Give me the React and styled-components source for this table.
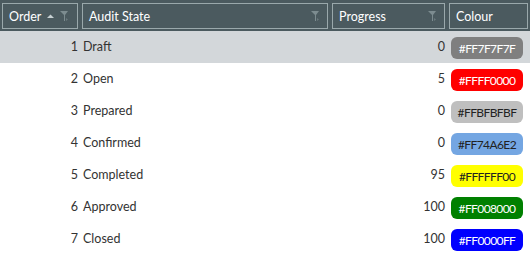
import React from "react"
import styled, { createGlobalStyle } from "styled-components"

const rows = [
  { order: 1, state: "Draft", progress: 0, colour: "#FF7F7F7F", bg: "#7f7f7f", fg: "#fff" },
  { order: 2, state: "Open", progress: 5, colour: "#FFFF0000", bg: "#ff0000", fg: "#fff" },
  { order: 3, state: "Prepared", progress: 0, colour: "#FFBFBFBF", bg: "#bfbfbf", fg: "#222" },
  { order: 4, state: "Confirmed", progress: 0, colour: "#FF74A6E2", bg: "#74a6e2", fg: "#222" },
  { order: 5, state: "Completed", progress: 95, colour: "#FFFFFF00", bg: "#ffff00", fg: "#222" },
  { order: 6, state: "Approved", progress: 100, colour: "#FF008000", bg: "#008000", fg: "#fff" },
  { order: 7, state: "Closed", progress: 100, colour: "#FF0000FF", bg: "#0000ff", fg: "#fff" },
]

const GlobalStyle = createGlobalStyle`
  body {
    margin: 0;
    background: #fff;
    font-family: Lato, "Noto Sans", sans-serif;
  }
`

const Grid = styled.div`
  width: 530px;
  display: grid;
  grid-template-columns: 80px 250px 117px 83px;
`

const HeaderCell = styled.div`
  background: #4b5a5f;
  padding: 3px 2px 2px;
  height: 26px;
`

const HeaderInner = styled.div`
  height: 100%;
  border: 1px solid #9aa8ab;
  box-sizing: border-box;
  display: flex;
  align-items: center;
  padding: 0 6px;
  color: #fff;
  font-size: 12.5px;
`

const Title = styled.span`
  flex: ${(p) => (p.$fixed ? "none" : "1")};
  margin-right: ${(p) => (p.$fixed ? "6px" : "0")};
`

const Cell = styled.div`
  height: 32px;
  box-sizing: border-box;
  display: flex;
  align-items: center;
  justify-content: ${(p) => (p.$right ? "flex-end" : "flex-start")};
  background: ${(p) => (p.$selected ? "#d3d7da" : "#fff")};
  color: #333;
  font-size: 12.5px;
  padding: ${(p) => p.$pad || "0"};
`

const Badge = styled.div`
  width: 72px;
  height: 22px;
  margin-top: 2px;
  border-radius: 6px;
  display: flex;
  align-items: center;
  justify-content: center;
  background: ${(p) => p.$bg};
  color: ${(p) => p.$fg};
  font-size: 12px;
  letter-spacing: -0.6px;
`

const Funnel = () => (
  <svg width="10" height="12" viewBox="0 0 10 12">
    <path d="M0 1 H8 L5 5 V11 L4 11 V5 Z" fill="#7d8c90" />
    <path d="M6 8 L8 9.5 L6 11 Z" fill="#6a797d" />
  </svg>
)

const SortArrow = styled.svg`
  margin-right: 6px;
`

const SortUp = () => (
  <SortArrow width="7" height="5" viewBox="0 0 7 5">
    <path d="M0 4 L3.5 0.5 L7 4 Z" fill="#c7d0d3" />
  </SortArrow>
)

export default function App() {
  return (
    <>
      <GlobalStyle />
      <Grid>
        <HeaderCell>
          <HeaderInner>
            <Title $fixed>Order</Title>
            <SortUp />
            <Funnel />
          </HeaderInner>
        </HeaderCell>
        <HeaderCell>
          <HeaderInner>
            <Title>Audit State</Title>
            <Funnel />
          </HeaderInner>
        </HeaderCell>
        <HeaderCell>
          <HeaderInner>
            <Title>Progress</Title>
            <Funnel />
          </HeaderInner>
        </HeaderCell>
        <HeaderCell>
          <HeaderInner>
            <Title>Colour</Title>
          </HeaderInner>
        </HeaderCell>
        {rows.map((r, i) => (
          <React.Fragment key={r.order}>
            <Cell $right $selected={i === 0} $pad="0 2px 2px 0">{r.order}</Cell>
            <Cell $selected={i === 0} $pad="0 0 2px 3px">{r.state}</Cell>
            <Cell $right $selected={i === 0} $pad="0 2px 2px 0">{r.progress}</Cell>
            <Cell $selected={i === 0} $pad="0 0 0 4px">
              <Badge $bg={r.bg} $fg={r.fg}>{r.colour}</Badge>
            </Cell>
          </React.Fragment>
        ))}
      </Grid>
    </>
  )
}
